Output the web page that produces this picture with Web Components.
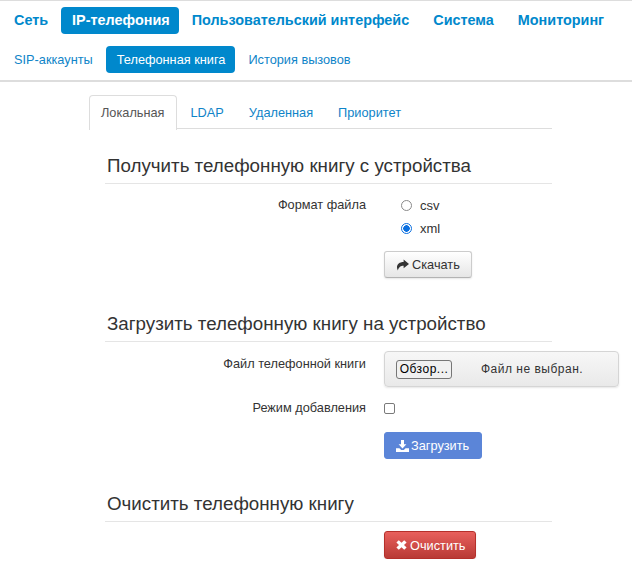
<!DOCTYPE html>
<html lang="ru">
<head>
<meta charset="utf-8">
<title>Телефонная книга</title>
<style>
    html, body { margin: 0; padding: 0; background: #fff; }
    body { font-family: "Liberation Sans", Arial, sans-serif; font-size: 12.75px; color: #333; }
</style>
</head>
<body>
<top-nav>
    <nav-link main>Сеть</nav-link>
    <nav-link main active>IP-телефония</nav-link>
    <nav-link main>Пользовательский интерфейс</nav-link>
    <nav-link main>Система</nav-link>
    <nav-link main>Мониторинг</nav-link>
    <nav-link slot="sub">SIP-аккаунты</nav-link>
    <nav-link slot="sub" active>Телефонная книга</nav-link>
    <nav-link slot="sub">История вызовов</nav-link>
</top-nav>
<page-body>
    <tab-bar>
        <tab-item active>Локальная</tab-item>
        <tab-item>LDAP</tab-item>
        <tab-item>Удаленная</tab-item>
        <tab-item>Приоритет</tab-item>
    </tab-bar>

    <form-section heading="Получить телефонную книгу с устройства" style="margin-top: 25px; --head-gap: 10px">
        <form-row label="Формат файла" style="--label-top: 1px">
            <radio-option name="fmt" value="csv"></radio-option>
            <radio-option name="fmt" value="xml" checked></radio-option>
        </form-row>
        <form-row style="margin-top: 11px">
            <ui-button icon="share">Скачать</ui-button>
        </form-row>
    </form-section>

    <form-section heading="Загрузить телефонную книгу на устройство" style="margin-top: 34px; --head-gap: 9px">
        <form-row label="Файл телефонной книги" style="--label-top: 3px">
            <file-well></file-well>
        </form-row>
        <form-row label="Режим добавления" style="margin-top: 11px">
            <check-box></check-box>
        </form-row>
        <form-row style="margin-top: 14px">
            <ui-button kind="primary" icon="download">Загрузить</ui-button>
        </form-row>
    </form-section>

    <form-section heading="Очистить телефонную книгу" style="margin-top: 33px; --head-gap: 9px">
        <form-row>
            <ui-button kind="danger" icon="remove">Очистить</ui-button>
        </form-row>
    </form-section>
</page-body>

<script>
class TopNav extends HTMLElement {
    constructor() {
        super();
        this.attachShadow({ mode: 'open' });
        this.shadowRoot.innerHTML = `
<style>
                :host {
                    display: block;
                    border-top: 1px solid #ddd;
                    border-bottom: 2px solid #ddd;
                    height: 79px;
                }
                .row {
                    display: flex;
                    align-items: center;
                    padding-left: 1px;
                }
                .main { padding-top: 6px; }
                .sub { padding-top: 12px; }
            </style>
            <div class="row main"><slot></slot></div>
            <div class="row sub"><slot name="sub"></slot></div>
        `;
    }
}

class NavLink extends HTMLElement {
    constructor() {
        super();
        this.attachShadow({ mode: 'open' });
        this.shadowRoot.innerHTML = `
<style>
                :host {
                    display: block;
                    height: 27px;
                    line-height: 27px;
                    padding: 0 11px;
                    margin-left: 2px;
                    border-radius: 4px;
                    color: #0f84c8;
                    font-size: 12.75px;
                    white-space: nowrap;
                }
                :host([main]) {
                    font-size: 14.4px;
                    font-weight: bold;
                    color: #0088cc;
                }
                :host([active]) {
                    background: #0088cc;
                    color: #fff;
                    padding-right: 10px;
                }
                :host([main][active]) {
                    padding-right: 9px;
                }
            </style>
            <slot></slot>
        `;
    }
}

class PageBody extends HTMLElement {
    constructor() {
        super();
        this.attachShadow({ mode: 'open' });
        this.shadowRoot.innerHTML = `
<style>
                :host {
                    display: block;
                    width: 463px;
                    margin: 13px 0 0 89px;
                }
            </style>
            <slot></slot>
        `;
    }
}

class TabBar extends HTMLElement {
    constructor() {
        super();
        this.attachShadow({ mode: 'open' });
        this.shadowRoot.innerHTML = `
<style>
                :host {
                    display: flex;
                    height: 33px;
                    border-bottom: 1px solid #ddd;
                }
            </style>
            <slot></slot>
        `;
    }
}

class TabItem extends HTMLElement {
    constructor() {
        super();
        this.attachShadow({ mode: 'open' });
        this.shadowRoot.innerHTML = `
<style>
                :host {
                    display: block;
                    height: 33px;
                    line-height: 33px;
                    padding: 0 11px;
                    margin-right: 1px;
                    border: 1px solid transparent;
                    border-bottom: 0;
                    border-radius: 4px 4px 0 0;
                    color: #0f84c8;
                    font-size: 12.75px;
                }
                :host([active]) {
                    color: #555;
                    background: #fff;
                    border-color: #ddd;
                    height: 34px;
                    margin-right: 2px;
                }
            </style>
            <slot></slot>
        `;
    }
}

class FormSection extends HTMLElement {
    constructor() {
        super();
        this.attachShadow({ mode: 'open' });
        this.shadowRoot.innerHTML = `
<style>
                :host {
                    display: block;
                    padding-left: 16px;
                }
                h3 {
                    margin: 0;
                    padding: 0 0 5px 2px;
                    font-size: 18.75px;
                    line-height: 24px;
                    font-weight: normal;
                    color: #333;
                    border-bottom: 1px solid #e5e5e5;
                }
                .body {
                    padding-top: var(--head-gap, 10px);
                }
            </style>
            <h3></h3>
            <div class="body"><slot></slot></div>
        `;
    }

    connectedCallback() {
        this.shadowRoot.querySelector('h3').innerText = this.getAttribute('heading');
    }
}

class FormRow extends HTMLElement {
    constructor() {
        super();
        this.attachShadow({ mode: 'open' });
        this.shadowRoot.innerHTML = `
<style>
                :host {
                    display: grid;
                    grid-template-columns: 261px 1fr;
                    column-gap: 18px;
                }
                .label {
                    padding-top: var(--label-top, 0);
                    text-align: right;
                    line-height: 20px;
                    color: #333;
                    font-size: 12.75px;
                }
            </style>
            <div class="label"></div>
            <div class="control"><slot></slot></div>
        `;
    }

    connectedCallback() {
        if (this.hasAttribute('label')) {
            this.shadowRoot.querySelector('.label').innerText = this.getAttribute('label');
        }
    }
}

class RadioOption extends HTMLElement {
    constructor() {
        super();
        this.attachShadow({ mode: 'open' });
        this.shadowRoot.innerHTML = `
<style>
                :host {
                    display: flex;
                    align-items: center;
                    height: 23px;
                    padding-left: 17px;
                    color: #333;
                    font-size: 13px;
                }
                input {
                    appearance: none;
                    box-sizing: border-box;
                    width: 11px;
                    height: 11px;
                    margin: 0 8px 0 0;
                    border: 1px solid #8a8a8a;
                    border-radius: 50%;
                    background: #fff;
                }
                input:checked {
                    border-color: #0a6fe0;
                    background: radial-gradient(circle, #0a6fe0 0 3px, #fff 3.5px);
                }
            </style>
            <input type="radio"><span></span>
        `;
    }

    connectedCallback() {
        this.shadowRoot.querySelector('span').innerText = this.getAttribute('value');
        this.shadowRoot.querySelector('input').checked = this.hasAttribute('checked');
    }
}

class CheckBox extends HTMLElement {
    constructor() {
        super();
        this.attachShadow({ mode: 'open' });
        this.shadowRoot.innerHTML = `
<style>
                :host { display: block; box-sizing: border-box; height: 20px; padding-top: 5px; }
                input {
                    appearance: none;
                    box-sizing: border-box;
                    display: block;
                    width: 11px;
                    height: 11px;
                    margin: 0;
                    border: 1px solid #7a7a7a;
                    border-radius: 2px;
                    background: #fff;
                }
            </style>
            <input type="checkbox">
        `;
    }
}

// The native file input would show the browser's own captions, so this one is put together by hand
class FileWell extends HTMLElement {
    constructor() {
        super();
        this.attachShadow({ mode: 'open' });
        this.shadowRoot.innerHTML = `
<style>
                :host {
                    display: flex;
                    align-items: center;
                    box-sizing: border-box;
                    width: 235px;
                    height: 36px;
                    padding-left: 11px;
                    border: 1px solid #d5d5d5;
                    border-radius: 4px;
                    background: linear-gradient(#f7f7f7, #e9e9e9);
                    box-shadow: 0 1px 2px rgba(0,0,0,.1);
                    color: #333;
                    font-size: 12px;
                    letter-spacing: .5px;
                }
                button {
                    box-sizing: border-box;
                    width: 56px;
                    height: 19px;
                    padding: 0;
                    border: 1px solid #767676;
                    border-radius: 3px;
                    background: #f0f0f0;
                    color: #000;
                    font: inherit;
                    letter-spacing: inherit;
                }
                span { margin-left: 29px; }
            </style>
            <button type="button">Обзор...</button><span>Файл не выбран.</span>
        `;
    }
}

class UiButton extends HTMLElement {
    static icons = {
        share: '<svg viewBox="0 0 14 12" width="13" height="12"><path d="M8.2 0 14 4.8 8.2 9.6V6.8C5.2 6.8 3 8 2 12 -0.6 7 2.4 2.8 8.2 2.8Z"/></svg>',
        download: '<svg viewBox="0 0 13 12" width="13" height="12"><path d="M5 0H8V4.2H10.4L6.5 8.4 2.6 4.2H5ZM0 8.2H3.4L5.2 10H7.8L9.6 8.2H13V12H0Z"/></svg>',
        remove: '<svg viewBox="0 0 11 10" width="11" height="10"><path d="M2.8 0.2 5.5 2.7 8.2 0.2 10.6 2.5 8 5 10.6 7.5 8.2 9.8 5.5 7.3 2.8 9.8 0.4 7.5 3 5 0.4 2.5Z"/></svg>'
    };

    constructor() {
        super();
        this.attachShadow({ mode: 'open' });
        this.shadowRoot.innerHTML = `
<style>
                :host {
                    display: flex;
                    width: fit-content;
                    align-items: center;
                    gap: 3px;
                    box-sizing: border-box;
                    height: 27px;
                    padding: 0 11px;
                    border: 1px solid #ccc;
                    border-bottom-color: #b3b3b3;
                    border-radius: 3px;
                    background: linear-gradient(#fff, #e6e6e6);
                    box-shadow: 0 1px 2px rgba(0,0,0,.1);
                    color: #333;
                    font-size: 12.75px;
                    white-space: nowrap;
                }
                :host([kind="primary"]) {
                    gap: 2px;
                    padding-right: 12px;
                    border-color: #5b85d8;
                    background: #5b85d8;
                    color: #fff;
                    box-shadow: none;
                }
                :host([kind="danger"]) {
                    height: 28px;
                    padding-right: 9px;
                    border-color: #b5302b;
                    background: linear-gradient(#e8605c, #b93a35);
                    color: #fff;
                }
                svg { display: block; fill: currentColor; }
                .icon { display: block; }
            </style>
            <span class="icon"></span><slot></slot>
        `;
    }

    connectedCallback() {
        this.shadowRoot.querySelector('.icon').innerHTML = UiButton.icons[this.getAttribute('icon')] || '';
    }
}

customElements.define('top-nav', TopNav);
customElements.define('nav-link', NavLink);
customElements.define('page-body', PageBody);
customElements.define('tab-bar', TabBar);
customElements.define('tab-item', TabItem);
customElements.define('form-section', FormSection);
customElements.define('form-row', FormRow);
customElements.define('radio-option', RadioOption);
customElements.define('check-box', CheckBox);
customElements.define('file-well', FileWell);
customElements.define('ui-button', UiButton);
</script>
</body>
</html>
